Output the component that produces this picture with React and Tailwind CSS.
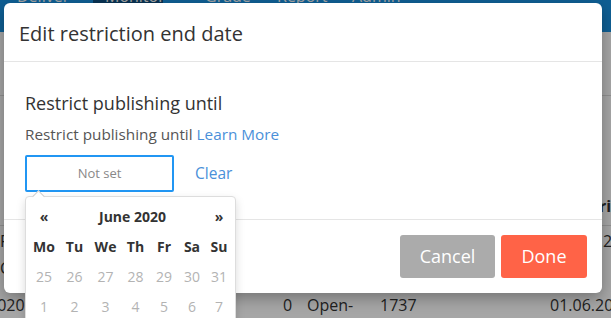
import React from "react"

const weekDays = ["Mo", "Tu", "We", "Th", "Fr", "Sa", "Su"]
const prevDays = [25, 26, 27, 28, 29, 30, 31]
const firstWeek = [1, 2, 3, 4, 5, 6, 7]

function NavBar() {
  return (
    <nav className="h-[32px] bg-[#1792e4] text-white text-[16px] leading-[20px] flex items-start">
      <div className="flex -mt-[14px]">
        <span className="ml-[17px] w-[65px]">Deliver ×</span>
        <span className="ml-[11px] w-[70px] bg-[#0f4f80] px-[12px] pt-[14px] -mt-[14px] pb-[4px]">Monitor</span>
        <span className="ml-[42px] w-[72px]">Grade</span>
        <span className="w-[75px]">Report</span>
        <span>Admin ×</span>
      </div>
    </nav>
  )
}

function PageBehind() {
  return (
    <div className="text-[#333] text-[16px]">
      <NavBar />
      <div className="h-[64px] border-b border-[#ddd]" />
      <div className="h-[95px]" />
      <div className="h-[35px] border-b border-[#ddd] pt-[5px] leading-[20px] font-bold grid grid-cols-[564px_100px]">
        <span />
        <span>Restriction</span>
      </div>
      <div className="h-[64px] pt-[2px] leading-[27px] grid grid-cols-[558px_100px]">
        <div>
          <div>Published</div>
          <div>Completed</div>
        </div>
        <div>01.06.2020</div>
      </div>
      <div className="pt-[5px] leading-[20px] grid grid-cols-[82px_258px_24px_73px_170px_100px] -ml-[57px]">
        <span>01.06.2020</span>
        <span />
        <span>0</span>
        <span>Open-</span>
        <span>1737</span>
        <span>01.06.2020</span>
      </div>
    </div>
  )
}

function DatePicker() {
  return (
    <div className="absolute left-[21px] top-[193px] w-[211px] h-[140px] bg-white border border-[#ddd] rounded-[4px] shadow-[0_4px_10px_rgba(0,0,0,0.15)] px-[3px] pt-[4px] text-[14px]">
      <div className="absolute -top-[5px] left-[8px] w-[9px] h-[9px] bg-white border-l border-t border-[#ccc] rotate-45" />
      <div className="grid grid-cols-[30px_31px_31px_29px_28px_28px_26px] text-center">
        <div className="h-[30px] flex items-center justify-center font-bold text-[#333]">«</div>
        <div className="col-span-5 h-[30px] flex items-center justify-center font-bold text-[#333]">June 2020</div>
        <div className="h-[30px] flex items-center justify-center font-bold text-[#333]">»</div>
        {weekDays.map((d) => (
          <div key={d} className="h-[30px] flex items-center justify-center font-bold text-[#333]">{d}</div>
        ))}
        {prevDays.map((d) => (
          <div key={"p" + d} className="h-[30px] flex items-center justify-center text-[#b3b3b3]">{d}</div>
        ))}
        {firstWeek.map((d) => (
          <div key={"f" + d} className="h-[30px] flex items-center justify-center text-[#b3b3b3]">{d}</div>
        ))}
      </div>
    </div>
  )
}

export default function App() {
  return (
    <div className="relative w-[611px] h-[318px] overflow-hidden bg-white font-['Open_Sans',sans-serif]">
      <PageBehind />
      <div className="absolute inset-0 bg-black/35" />

      <div className="absolute left-[4px] top-[3px] w-[598px] h-[290px] bg-white rounded-[6px] shadow-[0_5px_15px_rgba(0,0,0,0.3)] flex flex-col">
        <div className="pt-[17px] pb-[13px] px-[15px] border-b border-[#e5e5e5]">
          <h2 className="text-[20px] leading-[28px] text-[#333]">Edit restriction end date</h2>
        </div>

        <div className="flex-1 pt-[29px] px-[21px] border-b border-[#e5e5e5]">
          <h3 className="text-[18px] leading-[24px] text-[#333]">Restrict publishing until</h3>
          <p className="mt-[9px] text-[15.3px] leading-[20px] text-[#555]">
            Restrict publishing until <a className="text-[#4a90d9]">Learn More</a>
          </p>
          <div className="mt-[11px] flex items-center">
            <div className="w-[149px] h-[37px] border-2 border-[#2196f3] rounded-[2px] flex items-center justify-center text-[13px] text-[#888]">
              Not set
            </div>
            <a className="ml-[21px] text-[15.5px] text-[#4a90d9]">Clear</a>
          </div>
        </div>

        <div className="h-[73px] pt-[15px] pr-[15px] flex justify-end gap-[6px]">
          <button className="w-[95px] h-[43px] bg-[#ababab] text-white text-[18px] rounded-[3px]">Cancel</button>
          <button className="w-[86px] h-[43px] bg-[#ff6347] text-white text-[18px] rounded-[3px]">Done</button>
        </div>

        <DatePicker />
      </div>
    </div>
  )
}
